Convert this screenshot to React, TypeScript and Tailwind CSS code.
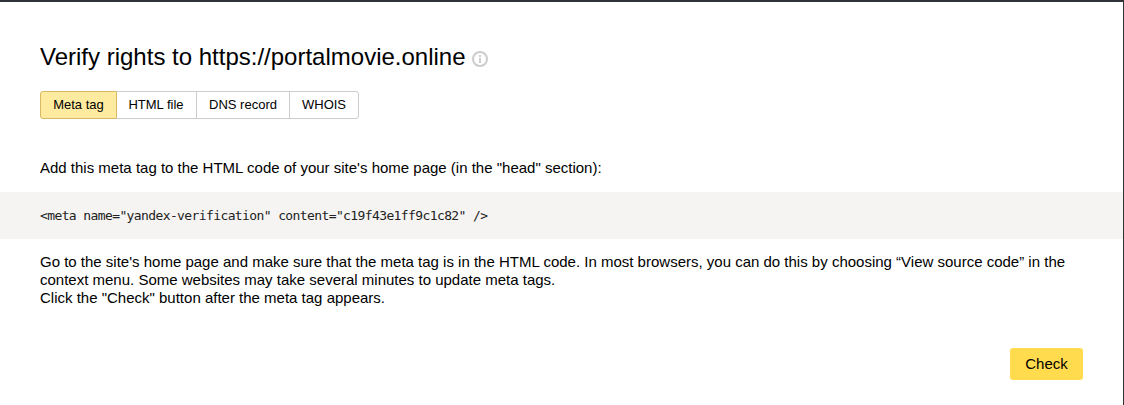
const tabs = ["Meta tag", "HTML file", "DNS record", "WHOIS"];

function InfoIcon() {
  return (
    <svg width="16" height="16" viewBox="0 0 16 16" className="ml-[6px] mt-[4px] shrink-0">
      <circle cx="8" cy="8" r="7" fill="none" stroke="#cccccc" strokeWidth="2" />
      <rect x="7" y="7" width="2" height="5" fill="#cccccc" />
      <rect x="7" y="4" width="2" height="2" fill="#cccccc" />
    </svg>
  );
}

export default function App() {
  return (
    <div className="h-[405px] w-[1124px] overflow-hidden border-t-2 border-r border-[#2f3337] bg-white font-['Liberation_Sans',Arial,sans-serif] text-black">
      <div className="px-10 pt-[38px]">
        <div className="flex h-[33px] items-center">
          <h1 className="text-[24px] leading-[33px] font-normal whitespace-nowrap">
            Verify rights to https://portalmovie.online
          </h1>
          <InfoIcon />
        </div>

        <div className="mt-[18px] flex h-7 w-fit text-[13px]">
          {tabs.map((tab, i) => (
            <div
              key={tab}
              className={
                i === 0
                  ? "flex w-[77px] items-center justify-center rounded-l-[3px] border border-[#d9b861] bg-[#ffeba0]"
                  : i === 3
                    ? "-ml-px flex w-[70px] items-center justify-center rounded-r-[3px] border border-[#cccccc]"
                    : i === 1
                      ? "-ml-px flex w-[81px] items-center justify-center border border-[#cccccc] border-l-0"
                      : "-ml-px flex w-[94px] items-center justify-center border border-[#cccccc]"
              }
            >
              {tab}
            </div>
          ))}
        </div>

        <p className="mt-[40px] text-[15px] leading-[18px]">
          Add this meta tag to the HTML code of your site's home page (in the "head" section):
        </p>
      </div>

      <div className="mt-[15px] flex h-[47px] items-center bg-[#f5f4f2] px-10 font-['DejaVu_Sans_Mono',monospace] text-[13px] tracking-[-0.61px] text-[#222222]">
        {'<meta name="yandex-verification" content="c19f43e1ff9c1c82" />'}
      </div>

      <div className="px-10 pt-[14px] text-[15px] leading-[18px]">
        <p className="w-[1040px]">
          Go to the site's home page and make sure that the meta tag is in the HTML code. In most browsers, you can do
          this by choosing “View source code” in the context menu. Some websites may take several minutes to update meta
          tags.
          <br />
          Click the "Check" button after the meta tag appears.
        </p>
      </div>

      <div className="flex justify-end pr-10 pt-[41px]">
        <button className="h-8 w-[73px] rounded-[3px] bg-[#ffdb4d] text-[15px] text-black">Check</button>
      </div>
    </div>
  );
}
